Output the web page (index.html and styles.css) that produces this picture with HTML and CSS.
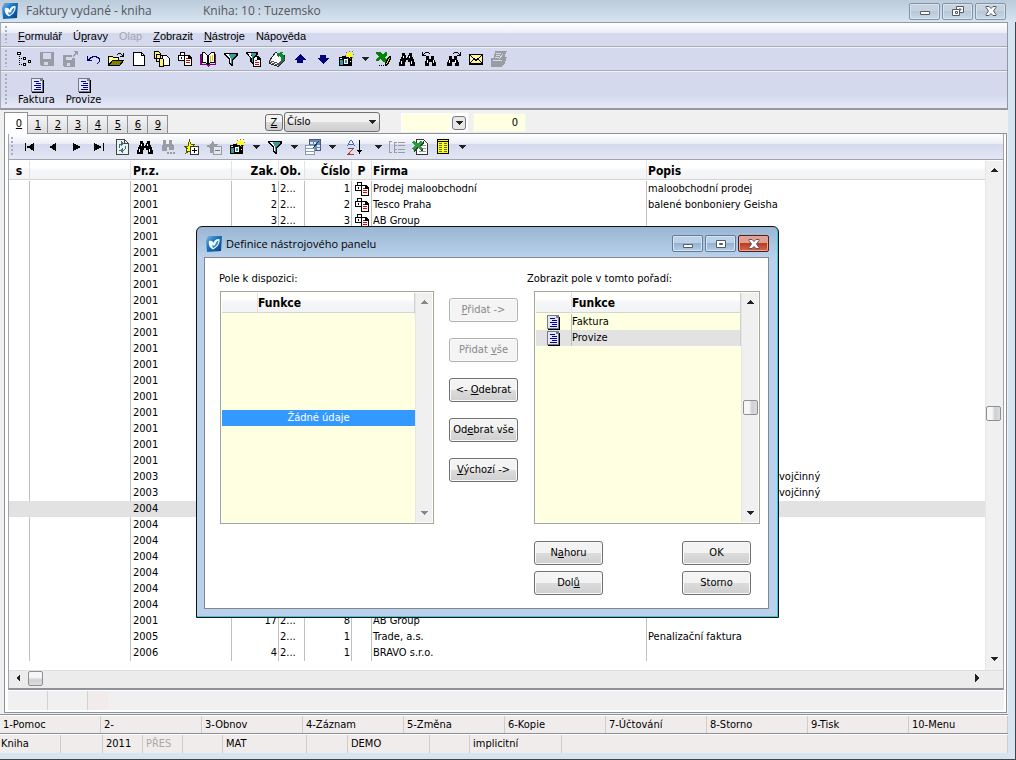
FILE: index.html
```html
<!DOCTYPE html>
<html lang="cs">
<head>
<meta charset="utf-8">
<title>Faktury vydané - kniha</title>
<link rel="stylesheet" href="styles.css">
</head>
<body>
<svg class="sprite" aria-hidden="true">
<defs>
<linearGradient id="lg" x1="0" y1="0" x2="1" y2="1"><stop offset="0" stop-color="#7db8e6"/><stop offset=".4" stop-color="#1b76c0"/><stop offset="1" stop-color="#083f7e"/></linearGradient>
<symbol id="logo" viewBox="0 0 16 16"><path fill="url(#lg)" d="M2 0h14l-1 15-14 1L0 5z"/><path fill="#f4faff" d="M3 5c2-.6 4 .2 4.600 2C8 4.500 10 2.600 13.500 3c.6 4-1.500 8-6.500 10.500C4 12 2 9 3 5z"/><path fill="#2684cc" d="M6.500 9c1 1 2 1 2.800-.5C10 6.500 11 5 12.500 4.500c0 3-2 6-5 7.500-1-.6-1.500-2-1-3z"/></symbol>
<symbol id="tree" viewBox="0 0 16 16"><path d="M1 1h4v3H1zM3 5h1v1H3zM3 7h1v1H3zM3 9h1v1H3zM3 11h1v1H3zM3 13h1v1H3zM5 7h1v1H5zM5 13h1v1H5zM7 6h3v3H7zM7 12h3v3H7zM12 9h3v3h-3z"/><path fill="#fff" d="M2 2h2v1H2zM8 7h1v1H8zM8 13h1v1H8zM13 10h1v1h-1z"/></symbol>
<symbol id="save" viewBox="0 0 16 16"><path fill="#9a9ca3" d="M1 1h14v14H2l-1-1z"/><path fill="#d4d9ee" d="M4 2h8v6H4zM5 11h4v3H5z"/></symbol>
<symbol id="savearrow" viewBox="0 0 16 16"><path fill="#9a9ca3" d="M1 4h9v3h3v9H2l-1-1zM11 0h5v5l-2-2-3 3-1-1 3-3z"/><path fill="#d4d9ee" d="M4 6h6v3H4zM5 12h3v3H5z"/></symbol>
<symbol id="undo" viewBox="0 0 16 16"><path fill="#000080" d="M2 5h1v3h1V7h1V6h2V5h5v1h2v1h1v4h-1v1h-1v1h-1v-1h1v-1h1V8h-1V7h-2V6H8v1H6v1H5v1h2v1H2z"/></symbol>
<symbol id="open" viewBox="0 0 16 16"><path fill="#ff8" stroke="#000" d="M.5 14V5.500h4l1 1h5v3"/><path fill="#808000" stroke="#000" d="M.5 14.500l4-5h11l-4 5z"/><path d="M9 3h1v1H9zM10 2h3v1h-3zM13 3h1v1h-1zM15 2h1v4h-4V5h2V4h1z"/></symbol>
<symbol id="page" viewBox="0 0 16 16"><path fill="#fff" stroke="#000" d="M2.500 1.500h8l3 3v10h-11z"/><path fill="none" stroke="#000" d="M10.500 1.500v3h3"/></symbol>
<symbol id="pages" viewBox="0 0 16 16"><path fill="#ffef70" stroke="#000" d="M.5.500h4l2 2v5h-6zM2.500 3.500h4l2 2v5h-6z"/><path fill="#fff" stroke="#000" d="M8.500 4.500h4l3 3v7h-7z"/><path fill="#ffef70" stroke="#000" d="M5.500 7.500h3l1 1v7h-4z"/></symbol>
<symbol id="lockdoc" viewBox="0 0 16 16"><path d="M3 1h5v3h4l3 3v8H7v-5H1V4h2z"/><path fill="#fff" d="M4 2h3v2H4zM2 5h5v4H2zM8 5h3v3h3v6H8z"/><path d="M4 6h1v2H4z"/><path fill="#e00000" d="M9 7h2v1H9zM9 9h4v1H9zM9 11h4v1H9z"/></symbol>
<symbol id="book" viewBox="0 0 16 16"><path fill="#800080" d="M0 3h2v10h5l1 1 1-1h6V3h1v11h-6l-2 2-2-2H0z"/><path fill="#fff" stroke="#000" d="M2.500 1.500h2l3 3v9l-2-2h-3zM8.500 4.500l3-3h3v10h-4l-2 2z"/><path fill="#cc0" d="M10 5h1v6h-1zM12 4h1v6h-1z"/></symbol>
<symbol id="funnel" viewBox="0 0 16 16"><path d="M1 2h14v2l-5 5v6H9l-3-2V9L1 4z"/><path fill="#fff" d="M3 3h3v1l2 4v4H7V8L3 4z"/><path fill="#389c9c" d="M6 3h7v1L9 8v5H8V8L6 4z"/></symbol>
<symbol id="funneldoc" viewBox="0 0 16 16"><path d="M7 5h5l3 3v8H7z"/><path fill="#fff" d="M8 6h3v3h3v6H8z"/><path fill="#e00000" d="M9 9h2v1H9zM9 11h4v1H9zM9 13h4v1H9z"/><path d="M0 1h12v2L8 7v6H7l-3-2V7L0 3z"/><path fill="#fff" d="M2 2h3v1l1 4H5z"/><path fill="#389c9c" d="M5 2h5v1L7 6v5H6V6z"/></symbol>
<symbol id="stack" viewBox="0 0 16 16"><path fill="#fff" stroke="#222" d="M.5 9.500l6-8 9 3v5l-6 6-9-3z"/><path fill="none" stroke="#555" d="M.5 9.500l9 3 6-6M1 11.500l8.500 2.500 6-6"/><path fill="#078a2c" d="M8 2l6-1-1 2 2 1v5l-3 2V7l-2-2-1 2z"/></symbol>
<symbol id="up" viewBox="0 0 16 16"><path fill="#000080" d="M8 3l6 6h-3v3H5V9H2z"/></symbol>
<symbol id="down" viewBox="0 0 16 16"><path fill="#000080" d="M8 13L2 7h3V4h6v3h3z"/></symbol>
<symbol id="camera" viewBox="0 0 16 16"><path d="M1 6h3V5h4v1h6v9H1z"/><path fill="#fff" d="M2 7h2v1H2zM6 8h4v5H6zM12 10h1v1h-1z"/><path fill="#399" d="M2 9h3v5H2zM7 9h2v3H7z"/><path fill="#7a7a00" d="M8 1h1v1H8zM11 0h1v1h-1zM14 0h1v1h-1zM7 4h1v1H7zM15 3h1v1h-1zM9 7h1v1H9zM12 7h1v1h-1zM14 6h1v1h-1z"/><path fill="#ff0" d="M9 2h2V1h1v1h2v2h1v1h-1v1h-2v1h-1V6H9V5H8V4h1z"/></symbol>
<symbol id="drop" viewBox="0 0 8 8"><path fill="#222" d="M0 2h8L4 6z"/></symbol>
<symbol id="excelpen" viewBox="0 0 16 16"><path fill="#078207" d="M0 1h4l3 3 2-3h2v4L9 6l2 3v2H7L5 8l-3 2H0V8l3-3-3-2z"/><path fill="#dd0" stroke="#000" d="M14.500 5.500l-2 1-3 6v2l2-1 3-6z"/><path d="M3 14h1v1H3zM5 14h1v1H5zM7 14h1v1H7z"/></symbol>
<symbol id="bino" viewBox="0 0 16 16"><path d="M3 2h3v2h1v2h2V4h1V2h3v3l1 2 2 5v3h-5v-4H9V9H7v2H6v4H0v-3l2-5 1-2z"/><path fill="#fff" d="M4 5h1v2H4zM2 10h1v3H2zM10 5h1v2h-1zM12 10h1v3h-1zM7 6h1v1H7z"/></symbol>
<symbol id="binonext" viewBox="0 0 16 16"><path d="M4 5h3v3h2V5h3v3l2 4v3h-4v-4H7v4H2v-3l2-4z"/><path fill="#fff" d="M4 9h1v3H4zM10 9h1v3h-1z"/><path d="M8 2h1v1H8zM9 1h4v1H9zM13 2h1v1h-1zM15 1h1v4h-4V4h2V3h1z"/></symbol>
<symbol id="binoprev" viewBox="0 0 16 16"><path d="M4 5h3v3h2V5h3v3l2 4v3h-4v-4H7v4H3v-3l1-4z"/><path fill="#fff" d="M5 9h1v3H5zM11 9h1v3h-1z"/><path d="M7 2h1v1H7zM3 1h4v1H3zM2 2h1v1H2zM0 1h1v2h1v1h2v1H0z"/></symbol>
<symbol id="mail" viewBox="0 0 16 16"><path d="M1 3h14v11H1z"/><path fill="#fff49a" d="M2 4h12v8H2z"/><path fill="none" stroke="#000" d="M2 4l6 5.500L14 4M2 12l4-4M14 12l-4-4"/></symbol>
<symbol id="graydoc" viewBox="0 0 16 16"><path fill="#9a9ca3" d="M4 0h12l-2 4v2h2l-2 6-3 4H0V7h3z"/><path fill="none" stroke="#d4d9ee" d="M5 2.500h5M5 4.500h4M4 6.500h4M2 9.500h9M12 3L8 8"/></symbol>
<symbol id="form" viewBox="0 0 16 16"><path fill="#777b88" d="M2 1h12v14H2z"/><path fill="#e4e8f6" d="M3 2h8v2h2v10H3z"/><path d="M14 3h1v13H3v-1h11z"/><path fill="#000090" d="M5 4h5v1H5zM7 6h5v1H7zM5 8h7v1H5zM7 10h5v1H7zM5 12h7v1H5z"/></symbol>
<symbol id="first" viewBox="0 0 16 16"><path d="M3 4h1v8H3zM12 4v8L5 8zM5 7h1v2H5z"/></symbol>
<symbol id="prev" viewBox="0 0 16 16"><path d="M11 4v8L4 8z"/></symbol>
<symbol id="next" viewBox="0 0 16 16"><path d="M5 4v8l8-4z"/></symbol>
<symbol id="last" viewBox="0 0 16 16"><path d="M12 4h1v8h-1zM3 4v8l8-4z"/></symbol>
<symbol id="refresh" viewBox="0 0 16 16"><path fill="#e8f4ee" stroke="#444" d="M2.500.500h8l4 4v11h-12z"/><path fill="none" stroke="#444" d="M10.500.500v4h4"/><path fill="none" stroke="#4a6c88" d="M5.500 9V6l2-1.500M11.500 6.500v3l-2 2H7"/><path fill="#4a6c88" d="M7 2l3 2.500L7 7zM9 9l-4 2.500L9 14z"/></symbol>
<symbol id="graybino" viewBox="0 0 16 16"><path fill="#9a9ca3" d="M3 1h3v4h3V1h3v4l2 2v4h-5V8H7v4H2V7l1-2zM7 13h2v2H7zM10 13h2v2h-2zM13 13h2v2h-2z"/></symbol>
<symbol id="plus" viewBox="0 0 16 16"><path fill="#ff0" stroke="#555500" d="M6.500 1.500l1.500 3.500h4l-3 3 1 5h-2l-2-1-3 2 1-4.500-3-2.500h4z"/><path fill="#fff" stroke="#333" d="M7.500 7.500h8v8h-8z"/><path d="M9 11h5v1H9zM11 9h1v5h-1z"/></symbol>
<symbol id="minus" viewBox="0 0 16 16"><path fill="#9a9ca3" d="M7 1l1 4h4l-3 3v6H4V9L0 7l5-2z"/><path fill="#e4e6ee" stroke="#9a9ca3" d="M7.500 7.500h8v8h-8z"/><path fill="#777" d="M9 11h5v1H9z"/></symbol>
<symbol id="gridtool" viewBox="0 0 16 16"><path fill="#5f8cc4" stroke="#557" d="M4.500.500h11v11h-11z"/><path fill="#dce8f6" d="M5 3h3v2H5zM9 3h2v2H9zM12 6h3v2h-3zM12 9h3v2h-3z"/><path fill="#fff" stroke="#8a9ab4" d="M.5 6.500h9v9h-9z"/><path fill="#8a9ab4" d="M1 9h8v1H1zM1 12h8v1H1z"/><path stroke="#333" d="M8 9l6-7"/></symbol>
<symbol id="sort" viewBox="0 0 16 16"><path fill="none" stroke="#3a6ab0" d="M.5 7l3-6h1l3 6M2 5.500h4"/><path fill="none" stroke="#b03a3a" d="M1 9.500h5.500L1 15.500h6"/><path d="M12 1h1v10h2l-2.500 4L10 11h2z"/></symbol>
<symbol id="list" viewBox="0 0 16 16"><path fill="#9a9ca3" d="M0 2h3v1H1v4H0zM0 7h1v6h2v1H0zM5 3h3v1H6v2h2v1H6v3h2v1H6v2h2v1H5zM9 3h7v1H9zM9 6h7v1H9zM9 10h7v1H9zM9 13h7v1H9z"/></symbol>
<symbol id="excel" viewBox="0 0 16 16"><path fill="#fff" stroke="#333" d="M4.500.500h7l4 4v11h-11z"/><path fill="#999" d="M7 6h7v1H7zM7 9h7v1H7zM7 12h7v1H7z"/><path stroke="#333" stroke-width="2" d="M2 3l9 9M12 3l-10 9"/><path stroke="#2a9a3a" stroke-width="3" d="M1 2.500l9 8M10 2.500l-9 8"/></symbol>
<symbol id="yellowgrid" viewBox="0 0 16 16"><path d="M2 0h12v15H2z"/><path fill="#ff0" d="M3 3h10v11H3z"/><path fill="#ff0" d="M3 1h10v1H3z"/><path fill="#5560a0" d="M4 4h3v1H4zM4 6h3v1H4zM4 8h3v1H4zM4 10h3v1H4zM4 12h3v1H4zM9 4h3v1H9zM9 6h3v1H9zM9 8h3v1H9zM9 10h3v1H9zM9 12h3v1H9z"/></symbol>
<symbol id="wmin" viewBox="0 0 12 10"><path fill="#fff" stroke="#555a68" d="M1.500 5.500h9v3h-9z"/></symbol>
<symbol id="wrest" viewBox="0 0 12 10"><path fill="#fff" fill-rule="evenodd" stroke="#555a68" d="M4.500.500h7v6h-7zM7 3h2v1H7z"/><path fill="#fff" stroke="#555a68" d="M.5 3.500h7v6h-7z"/><path fill="none" stroke="#555a68" d="M3.500 5.500h2v2h-2z"/></symbol>
<symbol id="wmax" viewBox="0 0 12 10"><path fill="#fff" stroke="#555a68" d="M1.500 1.500h9v7h-9z"/><path fill="#9bb5d0" stroke="#555a68" d="M4.500 4.500h3v1h-3z"/></symbol>
<symbol id="wclose" viewBox="0 0 12 10"><path fill="#fff" stroke="#555a68" d="M1 .5h3l2 2 2-2h3v1L8.500 5 11 8.500v1H8l-2-2-2 2H1v-1L3.500 5 1 1.500z"/></symbol>
</defs>
</svg>

<div class="window">
  <header class="titlebar">
    <svg class="icon"><use href="#logo"/></svg>
    <span class="title">Faktury vydané - kniha</span><span class="subtitle">Kniha: 10 : Tuzemsko</span>
    <div class="winbtns">
      <button class="winbtn" aria-label="Minimalizovat"><svg><use href="#wmin"/></svg></button>
      <button class="winbtn" aria-label="Obnovit"><svg><use href="#wrest"/></svg></button>
      <button class="winbtn" aria-label="Zavřít"><svg><use href="#wclose"/></svg></button>
    </div>
  </header>

  <div class="frame"><div class="client">
    <div class="bars">
      <nav class="menu bar">
        <i class="grip"></i>
        <button><u>F</u>ormulář</button><button>Ú<u>p</u>ravy</button><button disabled>Olap</button><button><u>Z</u>obrazit</button><button><u>N</u>ástroje</button><button>Nápo<u>v</u>ěda</button>
      </nav>
      <div class="tools bar">
        <i class="grip"></i>
        <button class="tool" aria-label="Strom"><svg><use href="#tree"/></svg></button>
        <button class="tool" aria-label="Uložit"><svg><use href="#save"/></svg></button>
        <button class="tool" aria-label="Uložit a zavřít"><svg><use href="#savearrow"/></svg></button>
        <button class="tool" aria-label="Zpět"><svg><use href="#undo"/></svg></button>
        <button class="tool" aria-label="Otevřít"><svg><use href="#open"/></svg></button>
        <button class="tool" aria-label="Nový"><svg><use href="#page"/></svg></button>
        <button class="tool" aria-label="Kopie"><svg><use href="#pages"/></svg></button>
        <button class="tool" aria-label="Zámek"><svg><use href="#lockdoc"/></svg></button>
        <button class="tool" aria-label="Kniha"><svg><use href="#book"/></svg></button>
        <button class="tool" aria-label="Filtr"><svg><use href="#funnel"/></svg></button>
        <button class="tool" aria-label="Filtr dokladu"><svg><use href="#funneldoc"/></svg></button>
        <button class="tool" aria-label="Obnovit data"><svg><use href="#stack"/></svg></button>
        <button class="tool" aria-label="Nahoru"><svg><use href="#up"/></svg></button>
        <button class="tool" aria-label="Dolů"><svg><use href="#down"/></svg></button>
        <button class="tool" aria-label="Snímek"><svg><use href="#camera"/></svg></button>
        <button class="more" aria-label="Další"><svg><use href="#drop"/></svg></button>
        <button class="tool" aria-label="Excel"><svg><use href="#excelpen"/></svg></button>
        <button class="tool" aria-label="Hledat"><svg><use href="#bino"/></svg></button>
        <button class="tool" aria-label="Hledat předchozí"><svg><use href="#binoprev"/></svg></button>
        <button class="tool" aria-label="Hledat další"><svg><use href="#binonext"/></svg></button>
        <button class="tool" aria-label="E-mail"><svg><use href="#mail"/></svg></button>
        <button class="tool" aria-label="Dokumenty"><svg><use href="#graydoc"/></svg></button>
      </div>
      <div class="panel">
        <i class="grip"></i>
        <button class="big"><svg><use href="#form"/></svg>Faktura</button>
        <button class="big"><svg><use href="#form"/></svg>Provize</button>
      </div>
    </div>

    <div class="tabrow">
      <div class="tabs" role="tablist">
        <button class="tab on"><u>0</u></button><button class="tab"><u>1</u></button><button class="tab"><u>2</u></button><button class="tab"><u>3</u></button><button class="tab"><u>4</u></button><button class="tab"><u>5</u></button><button class="tab"><u>6</u></button><button class="tab"><u>9</u></button>
      </div>
      <div class="query">
        <button class="zbtn"><u>Z</u></button>
        <span class="selwrap"><select aria-label="Řadit podle"><option>Číslo</option></select><svg><use href="#drop"/></svg></span>
        <span class="combo"><input aria-label="Hodnota"><button aria-label="Rozbalit"><svg><use href="#drop"/></svg></button></span>
        <input class="count" aria-label="Počet" value="0">
      </div>
    </div>

    <main class="book">
      <div class="sheet">
        <div class="tools sub">
          <i class="grip"></i>
          <button class="tool" aria-label="První"><svg><use href="#first"/></svg></button>
          <button class="tool" aria-label="Předchozí"><svg><use href="#prev"/></svg></button>
          <button class="tool" aria-label="Následující"><svg><use href="#next"/></svg></button>
          <button class="tool" aria-label="Poslední"><svg><use href="#last"/></svg></button>
          <button class="tool" aria-label="Obnovit"><svg><use href="#refresh"/></svg></button>
          <button class="tool" aria-label="Hledat"><svg><use href="#bino"/></svg></button>
          <button class="tool" aria-label="Hledat dále"><svg><use href="#graybino"/></svg></button>
          <button class="tool" aria-label="Přidat"><svg><use href="#plus"/></svg></button>
          <button class="tool" aria-label="Odebrat"><svg><use href="#minus"/></svg></button>
          <button class="tool" aria-label="Snímek"><svg><use href="#camera"/></svg></button>
          <button class="more" aria-label="Další"><svg><use href="#drop"/></svg></button>
          <button class="tool" aria-label="Filtr"><svg><use href="#funnel"/></svg></button>
          <button class="more" aria-label="Další"><svg><use href="#drop"/></svg></button>
          <button class="tool" aria-label="Sloupce"><svg><use href="#gridtool"/></svg></button>
          <button class="more" aria-label="Další"><svg><use href="#drop"/></svg></button>
          <button class="tool wide" aria-label="Řadit"><svg><use href="#sort"/></svg></button>
          <button class="more" aria-label="Další"><svg><use href="#drop"/></svg></button>
          <button class="tool" aria-label="Seznam"><svg><use href="#list"/></svg></button>
          <button class="tool" aria-label="Export"><svg><use href="#excel"/></svg></button>
          <button class="tool" aria-label="Tabulka"><svg><use href="#yellowgrid"/></svg></button>
          <button class="more" aria-label="Další"><svg><use href="#drop"/></svg></button>
        </div>
        <div class="gridarea">
          <div class="scroller">
          <table class="grid">
            <colgroup><col class="c1"><col class="c2"><col class="c2"><col class="c4"><col class="c5"><col class="c4"><col class="c7"><col class="c8"><col></colgroup>
            <thead><tr><th class="mid">s</th><th></th><th>Pr.z.</th><th class="num">Zak.</th><th class="tight">Ob.</th><th class="num">Číslo</th><th class="mid">P</th><th class="tight">Firma</th><th class="tight">Popis</th></tr></thead>
            <tbody>
              <tr><td></td><td></td><td>2001</td><td class="num">1</td><td>2...</td><td class="num">1</td><td class="ic"><svg><use href="#lockdoc"/></svg></td><td>Prodej maloobchodní</td><td>maloobchodní prodej</td></tr>
              <tr><td></td><td></td><td>2001</td><td class="num">2</td><td>2...</td><td class="num">2</td><td class="ic"><svg><use href="#lockdoc"/></svg></td><td>Tesco Praha</td><td>balené bonboniery Geisha</td></tr>
              <tr><td></td><td></td><td>2001</td><td class="num">3</td><td>2...</td><td class="num">3</td><td class="ic"><svg><use href="#lockdoc"/></svg></td><td>AB Group</td><td></td></tr>
              <tr><td></td><td></td><td>2001</td><td></td><td></td><td></td><td></td><td></td><td></td></tr>
              <tr><td></td><td></td><td>2001</td><td></td><td></td><td></td><td></td><td></td><td></td></tr>
              <tr><td></td><td></td><td>2001</td><td></td><td></td><td></td><td></td><td></td><td></td></tr>
              <tr><td></td><td></td><td>2001</td><td></td><td></td><td></td><td></td><td></td><td></td></tr>
              <tr><td></td><td></td><td>2001</td><td></td><td></td><td></td><td></td><td></td><td></td></tr>
              <tr><td></td><td></td><td>2001</td><td></td><td></td><td></td><td></td><td></td><td></td></tr>
              <tr><td></td><td></td><td>2001</td><td></td><td></td><td></td><td></td><td></td><td></td></tr>
              <tr><td></td><td></td><td>2001</td><td></td><td></td><td></td><td></td><td></td><td></td></tr>
              <tr><td></td><td></td><td>2001</td><td></td><td></td><td></td><td></td><td></td><td></td></tr>
              <tr><td></td><td></td><td>2001</td><td></td><td></td><td></td><td></td><td></td><td></td></tr>
              <tr><td></td><td></td><td>2001</td><td></td><td></td><td></td><td></td><td></td><td></td></tr>
              <tr><td></td><td></td><td>2001</td><td></td><td></td><td></td><td></td><td></td><td></td></tr>
              <tr><td></td><td></td><td>2001</td><td></td><td></td><td></td><td></td><td></td><td></td></tr>
              <tr><td></td><td></td><td>2001</td><td></td><td></td><td></td><td></td><td></td><td></td></tr>
              <tr><td></td><td></td><td>2001</td><td></td><td></td><td></td><td></td><td></td><td></td></tr>
              <tr><td></td><td></td><td>2003</td><td></td><td></td><td></td><td></td><td></td><td class="tail">vojčinný</td></tr>
              <tr><td></td><td></td><td>2003</td><td></td><td></td><td></td><td></td><td></td><td class="tail">vojčinný</td></tr>
              <tr class="cur"><td></td><td></td><td>2004</td><td></td><td></td><td></td><td></td><td></td><td></td></tr>
              <tr><td></td><td></td><td>2004</td><td></td><td></td><td></td><td></td><td></td><td></td></tr>
              <tr><td></td><td></td><td>2004</td><td></td><td></td><td></td><td></td><td></td><td></td></tr>
              <tr><td></td><td></td><td>2004</td><td></td><td></td><td></td><td></td><td></td><td></td></tr>
              <tr><td></td><td></td><td>2004</td><td></td><td></td><td></td><td></td><td></td><td></td></tr>
              <tr><td></td><td></td><td>2004</td><td></td><td></td><td></td><td></td><td></td><td></td></tr>
              <tr><td></td><td></td><td>2004</td><td></td><td></td><td></td><td></td><td></td><td></td></tr>
              <tr><td></td><td></td><td>2001</td><td class="num">17</td><td>2...</td><td class="num">8</td><td></td><td>AB Group</td><td></td></tr>
              <tr><td></td><td></td><td>2005</td><td></td><td>2...</td><td class="num">1</td><td></td><td>Trade, a.s.</td><td>Penalizační faktura</td></tr>
              <tr><td></td><td></td><td>2006</td><td class="num">4</td><td>2...</td><td class="num">1</td><td></td><td>BRAVO s.r.o.</td><td></td></tr>
            </tbody>
          </table>
          </div>
          <div class="vscroll main"><svg class="flip"><use href="#drop"/></svg><span class="gap a"></span><i class="thumb"></i><span class="gap b"></span><svg><use href="#drop"/></svg></div>
        </div>
        <div class="hscroll"><svg class="left"><use href="#drop"/></svg><i class="thumb"></i><svg class="right"><use href="#drop"/></svg></div>
      </div>
      <div class="info"><span></span><span></span><span></span></div>
    </main>

    <div class="fkeys"><button>1-Pomoc</button><button>2-</button><button>3-Obnov</button><button>4-Záznam</button><button>5-Změna</button><button>6-Kopie</button><button>7-Účtování</button><button>8-Storno</button><button>9-Tisk</button><button>10-Menu</button></div>
    <footer class="status"><span>Kniha</span><span></span><span>2011</span><span class="dim">PŘES</span><span></span><span>MAT</span><span></span><span>DEMO</span><span></span><span>implicitní</span><span></span></footer>
  </div></div>

  <section class="dialog" role="dialog" aria-labelledby="dt">
    <header class="dtitle">
      <svg class="icon"><use href="#logo"/></svg><span id="dt">Definice nástrojového panelu</span>
      <div class="winbtns">
        <button class="winbtn" aria-label="Minimalizovat"><svg><use href="#wmin"/></svg></button>
        <button class="winbtn" aria-label="Maximalizovat"><svg><use href="#wmax"/></svg></button>
        <button class="winbtn red" aria-label="Zavřít"><svg><use href="#wclose"/></svg></button>
      </div>
    </header>
    <div class="dbody">
      <div class="dleft">
        <p class="cap">Pole k dispozici:</p>
        <div class="listbox">
          <div class="lmain">
            <table class="ltable none"><thead><tr><th class="lc"></th><th>Funkce</th></tr></thead></table>
            <p class="empty">Žádné údaje</p>
          </div>
          <div class="vscroll off"><svg class="flip"><use href="#drop"/></svg><svg><use href="#drop"/></svg></div>
        </div>
      </div>
      <div class="dmid">
        <button class="btn" disabled><u>P</u>řidat -&gt;</button>
        <button class="btn" disabled>Přidat <u>v</u>še</button>
        <button class="btn">&lt;- <u>O</u>debrat</button>
        <button class="btn">Od<u>e</u>brat vše</button>
        <button class="btn"><u>V</u>ýchozí -&gt;</button>
      </div>
      <div class="dright">
        <p class="cap">Zobrazit pole v tomto pořadí:</p>
        <div class="listbox">
          <div class="lmain">
            <table class="ltable"><thead><tr><th class="lc"></th><th>Funkce</th></tr></thead>
            <tbody><tr><td class="ic"><svg><use href="#form"/></svg></td><td>Faktura</td></tr><tr class="cur"><td class="ic"><svg><use href="#form"/></svg></td><td>Provize</td></tr></tbody></table>
          </div>
          <div class="vscroll"><svg class="flip"><use href="#drop"/></svg><i class="thumb"></i><svg><use href="#drop"/></svg></div>
        </div>
        <div class="acts">
          <button class="btn">N<u>a</u>horu</button><button class="btn">OK</button>
          <button class="btn">Dol<u>ů</u></button><button class="btn">Storno</button>
        </div>
      </div>
    </div>
  </section>
</div>
</body>
</html>
```

FILE: styles.css
```css
* { box-sizing: border-box; }
body { margin: 0; background: #d7e4f2; color: #000; font: 11px/16px "DejaVu Sans Condensed", "Noto Sans", sans-serif; }
button, input, select { font: inherit; color: inherit; margin: 0; }
button { padding: 0; border: 0; background: none; white-space: nowrap; }
p { margin: 0; }
svg { display: block; width: 16px; height: 16px; flex: none; shape-rendering: crispEdges; }
.sprite { position: absolute; width: 0; height: 0; }
.icon { shape-rendering: auto; }
.window { position: relative; min-height: 100vh; display: flex; flex-direction: column; }

.titlebar { height: 22px; display: flex; align-items: center; padding: 0 10px 0 2px; gap: 8px; background: linear-gradient(#bccbd9, #d7e4f1); color: #555560; font: 12px/16px "Open Sans", sans-serif; }
.title { width: 169px; white-space: nowrap; }
.winbtns { display: flex; gap: 2px; margin-left: auto; }
.winbtn { width: 31px; height: 17px; border: 1px solid #7f93ab; border-radius: 2px; background: linear-gradient(#c6d3df 45%, #b7c7d7 50%, #cad9e6); display: flex; align-items: center; justify-content: center; box-shadow: inset 0 0 0 1px #d8e3ee; }
.winbtn svg { width: 12px; height: 10px; shape-rendering: auto; }

.frame { flex: 1; display: flex; border-right: 1px solid #444; border-bottom: 1px solid #444; padding: 0 7px 6px 0; }
.client { flex: 1; min-width: 0; display: flex; flex-direction: column; background: #f0f0f0; }
.bars { border: 1px solid #9496a0; border-left-color: #a9abb3; border-bottom-width: 2px; margin-bottom: 1px; }
.bar { height: 24px; display: flex; align-items: center; border-bottom: 1px solid #aaacb5; background: #d4d9ed; box-shadow: inset 0 1px #eef1fa; }
.menu { background: linear-gradient(#fff, #e9edf6 10px, #d4d9ed 10px); box-shadow: none; gap: 11px; font-family: "Liberation Sans", sans-serif; padding-top: 3px; }
.menu button:disabled { color: #a5a7ae; }
.grip { width: 2px; align-self: stretch; margin: 3px 9px 3px 4px; flex: none; background: repeating-linear-gradient(#a9adbd 0 2px, transparent 2px 4px); }
.menu .grip { margin: 0 0 3px 4px; }
.tools .grip { margin-right: 5px; }
.tool { width: 23px; height: 20px; display: flex; align-items: center; justify-content: center; }
.more { width: 15px; height: 20px; display: flex; align-items: center; justify-content: center; }
.more svg { width: 8px; height: 8px; }
.tool.wide { width: 31px; }
.panel { height: 37px; display: flex; align-items: flex-end; background: linear-gradient(#d4d9ed 24px, #e6eaf7); box-shadow: inset 0 1px #eef1fa; }
.panel .grip { margin-right: 6px; }
.big { width: 47px; display: flex; flex-direction: column; align-items: center; line-height: 13px; padding-bottom: 2px; }

.tabrow { height: 22px; display: flex; align-items: flex-end; padding-left: 4px; }
.tabs { display: flex; align-items: flex-end; width: 261px; }
.tab { width: 20px; height: 18px; border: 1px solid #8c9099; border-bottom: 0; border-left: 0; background: linear-gradient(#f4f4f4, #dcdcdc); line-height: 18px; padding-left: 1px; }
.tab.on { width: 24px; height: 22px; margin-bottom: -1px; border-left: 1px solid #8c9099; background: #fff; padding-left: 6px; position: relative; z-index: 1; }
.query { display: flex; align-items: center; align-self: stretch; }
.zbtn { width: 18px; height: 17px; border: 1px solid #707070; border-radius: 3px; background: linear-gradient(#f4f4f4 50%, #dadada 50%, #d0d0d0); margin-right: 1px; }
.selwrap { position: relative; width: 96px; height: 20px; }
.selwrap select { appearance: none; width: 100%; height: 20px; border: 1px solid #707070; border-radius: 3px; padding: 0 2px; background: linear-gradient(#f2f2f2 50%, #dcdcdc 50%, #cfcfcf); }
.selwrap svg { position: absolute; right: 4px; top: 6px; width: 8px; height: 8px; pointer-events: none; }
.combo { display: flex; width: 67px; height: 19px; background: #fff; margin: 0 5px 0 21px; padding: 1px; }
.combo input, .count { border: 0; padding: 0; background: #ffffe1; }
.combo input { flex: 1; min-width: 0; }
.combo button { width: 14px; height: 14px; margin: 2px 1px 0 2px; border: 1px solid #777; border-radius: 3px; background: #e8e8e8; display: flex; align-items: center; justify-content: center; }
.combo svg { width: 8px; height: 8px; }
.count { width: 53px; height: 19px; border: 1px solid #f6f6f0; text-align: right; padding-right: 7px; }

.book { flex: 1; display: flex; flex-direction: column; border: 1px solid #8c9099; margin: 0 1px 0 4px; background: #fff; padding: 0 2px 2px 3px; }
.sheet { flex: 1; display: flex; flex-direction: column; border: 1px solid #a3a5ad; border-top: 0; border-bottom: 2px solid #8f9199; }
.sub { height: 26px; display: flex; align-items: center; background: linear-gradient(#fff, #eaedf6 10px, #d4d9ed 10px, #e2e6f4 24px); border-bottom: 1px solid #a3a5ad; }
.sub .grip { margin-left: 2px; }
.gridarea { flex: 1; display: flex; padding-top: 1px; }
.scroller { flex: 1; min-width: 0; }
.grid, .ltable { width: 100%; border-collapse: separate; border-spacing: 0; table-layout: fixed; }
.c1 { width: 21px; } .c2 { width: 101px; } .c4 { width: 47px; } .c5 { width: 26px; } .c7 { width: 20px; } .c8 { width: 275px; }
th { height: 20px; padding: 0 2px; text-align: left; font: bold 12px/18px "DejaVu Sans Condensed", sans-serif; white-space: nowrap; border-right: 1px solid #e2e2e4; border-bottom: 1px solid #d5d5d8; background: linear-gradient(#fff 7px, #f6f7f8 8px, #f1f2f4); }
.grid thead th { height: 20px; border-bottom: 1px solid #fff; box-shadow: inset 0 -1px #d5d5d8; }
td { height: 16px; padding: 0 1px 0 1px; line-height: 16px; white-space: nowrap; border-right: 1px solid #c0c0c0; overflow: hidden; }
td:nth-child(3) { padding-left: 2px; }
tr > :last-child { border-right: 0; }
th.tight { padding-left: 1px; }
th.num, td.num { text-align: right; padding: 0 1px 0 0; }
th.mid { text-align: center; padding: 0; }
td.ic { padding: 0 0 0 2px; }
td.tail { padding-left: 132px; }
.cur td { background: #e2e2e2; border-right-color: #e2e2e2; }
.vscroll { width: 17px; display: flex; flex-direction: column; align-items: center; background: #f0f0f0; padding: 7px 0; border-left: 1px solid #e6e6e6; }
.vscroll.main { width: 18px; padding: 5px 2px 7px 0; }
.vscroll svg { width: 8px; height: 8px; }
.flip { transform: rotate(180deg); }
.left { transform: rotate(90deg); }
.right { transform: rotate(-90deg); }
.thumb { width: 15px; height: 15px; border: 1px solid #8e8f94; border-radius: 2px; background: linear-gradient(90deg, #f6f6f6 40%, #cfd0d4 60%, #dcdce0); flex: none; }
.gap.a { flex: 234; } .gap.b { flex: 236; }
.hscroll { height: 18px; display: flex; align-items: center; background: #ececec; border-top: 1px solid #e0e0e0; padding: 0 22px 3px 5px; }
.hscroll svg { width: 8px; height: 8px; }
.hscroll .thumb { margin-left: 6px; margin-right: auto; background: linear-gradient(#f6f6f6 40%, #cfd0d4 60%, #dcdce0); }
.info { display: flex; height: 19px; margin-top: 1px; background: #f0f0f0; }
.info span { width: 40px; border-right: 1px solid #d5d0d0; }
.info span:last-child { border: 0; width: 20px; background: #f1ebeb; }

.fkeys { display: grid; grid-template-columns: repeat(9, 101fr) 99fr; height: 20px; margin-top: 1px; border-top: 1px solid #8c9099; background: #f0eceb; box-shadow: inset 0 1px #fff; border-bottom: 1px solid #8c9099; }
.fkeys button { text-align: left; padding-left: 3px; border-right: 1px solid #cfcccc; margin-top: 1px; }
.status { display: flex; height: 19px; background: #f0eceb; border-top: 1px solid #fff; line-height: 18px; }
.status span { padding-left: 3px; border-right: 1px solid #d0cccc; flex: 0 0 40px; }
.status span:nth-child(1) { flex-basis: 61px; padding-left: 1px; }
.status span:nth-child(2) { flex-basis: 42px; }
.status span:nth-child(6) { flex-basis: 84px; }
.status span:nth-child(7) { flex-basis: 41px; }
.status span:nth-child(8) { flex-basis: 82px; }
.status span:nth-child(10) { flex-basis: 92px; }
.status span:nth-child(11) { flex: 1; }
.status .dim { color: #a9a9a9; }

.dialog { position: absolute; left: 196px; top: 226px; width: 583px; border: 1px solid #111; border-radius: 6px 6px 0 0; background: linear-gradient(#9ab6d3, #b9d1ea 30px); box-shadow: inset -1px -1px #35c8e0; padding: 0 9px 8px 7px; }
.dtitle { display: flex; align-items: center; height: 30px; gap: 4px; padding: 4px 0 0 2px; font: 11px/16px "Open Sans", sans-serif; }
.dtitle .winbtn { background: linear-gradient(#bdd2e8 45%, #94b3d2 50%, #b4cde6); border-color: #5f7da0; height: 17px; }
.dtitle .winbtn.red { background: linear-gradient(#e0a090 45%, #bd3a22 50%, #d8674c); border-color: #5a1a18; box-shadow: inset 0 0 0 1px #e6a79b; }
.dtitle .winbtns { align-self: flex-start; margin-top: 4px; }
.dbody { display: flex; background: #fff; border: 1px solid #83868f; padding: 12px 8px 13px 14px; }
.dleft { width: 215px; }
.cap { height: 21px; line-height: 18px; white-space: nowrap; }
.dmid { width: 69px; margin: 28px 16px 0 15px; display: flex; flex-direction: column; gap: 16px; }
.dright { flex: 1; }
.dleft .listbox { margin-left: 1px; }
.dright .cap { margin-left: -7px; }
.listbox { height: 233px; border: 1px solid #a3a5ad; background: #ffffe1; display: flex; padding: 1px; }
.lmain { flex: 1; min-width: 0; display: flex; flex-direction: column; }
.lc { width: 36px; }
.ltable th:last-child, .ltable td:last-child { border-right: 1px solid #d0d0d0; padding-left: 0; }
.ltable thead th { height: 21px; border-bottom: 1px solid #ffffe1; box-shadow: inset 0 -1px #d5d5d8; }
.ltable .cur td:first-child { border-right-color: #c0c0c0; }
.ltable td.ic { padding-left: 9px; }
.empty { margin-top: 96px; height: 16px; line-height: 16px; background: #3399ff; color: #fff; text-align: center; }
.listbox .vscroll { width: 17px; justify-content: space-between; padding: 5px 0; }
.off svg { opacity: .5; }
.btn { height: 24px; border: 1px solid #707070; border-radius: 3px; background: linear-gradient(#f3f3f3 50%, #dcdcdc 50%, #cfcfcf); box-shadow: inset 0 0 0 1px #fafafa; }
.btn:disabled { color: #888; border-color: #adb2b5; background: #f4f4f4; }
.acts { display: grid; grid-template-columns: 69px 69px; justify-content: space-between; gap: 6px; padding: 17px 9px 0 0; }
```
